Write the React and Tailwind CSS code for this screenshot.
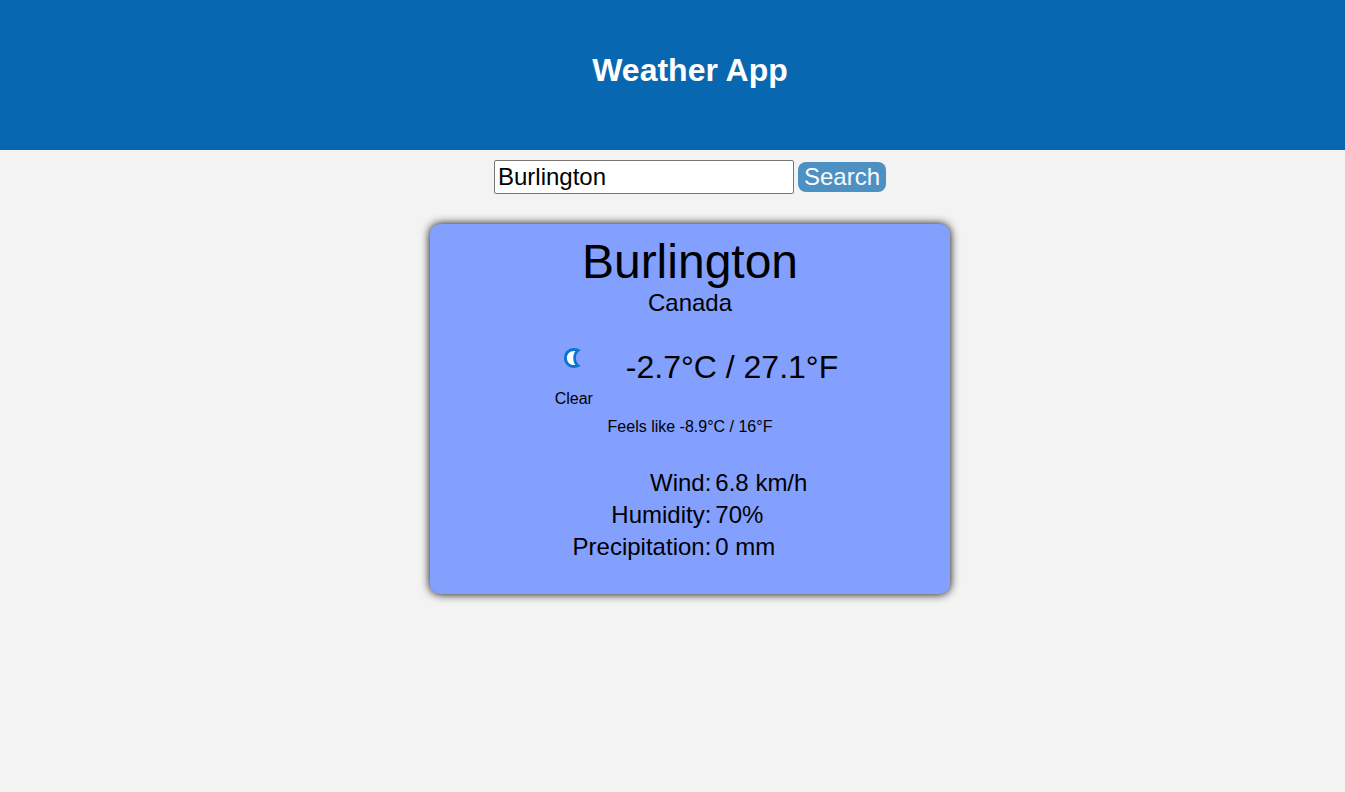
export default function App() {
  return (
    <div className="min-h-screen bg-[#f3f3f3] font-['Liberation_Sans',Arial,sans-serif] text-black">
      <header className="flex h-[150px] items-start justify-center bg-[#0867b1] pt-[50px] pl-[35px]">
        <h1 className="text-[32px] leading-10 font-bold text-white">Weather App</h1>
      </header>
      <main className="flex flex-col items-center pt-[10px] pl-[35px]">
        <form className="flex items-center gap-1" onSubmit={(e) => e.preventDefault()}>
          <input
            type="text"
            aria-label="City"
            defaultValue="Burlington"
            className="h-[34px] w-[300px] rounded-[2px] border border-[#767676] bg-white px-[3px] text-2xl leading-7"
          />
          <button type="submit" className="h-[30px] rounded-lg bg-[#0867b1] px-[6px] text-2xl leading-[30px] text-white opacity-70">
            Search
          </button>
        </form>
        <section className="mt-[30px] flex w-full max-w-[520px] flex-col items-center rounded-[10px] bg-[#83a0ff] pt-[10px] pb-[31px] shadow-[0_0_10px_#000]">
          <h2 className="text-5xl leading-[56px]">Burlington</h2>
          <p className="text-2xl leading-[26px]">Canada</p>
          <div className="mt-[10px] flex items-center gap-5">
            <div className="flex flex-col items-center">
              <svg viewBox="0 0 64 64" className="h-16 w-16" aria-hidden="true">
                <path d="M38.6 24.2 C36.8 22.9 34.6 22.1 32 22.1 C26.3 22.1 22 26.4 22 32 C22 37.6 26.3 41.9 32 41.9 C34.6 41.9 36.8 41.1 38.6 39.8 C35.6 38.2 33.9 35.5 33.9 32 C33.9 28.5 35.6 25.8 38.6 24.2Z" fill="#0875d1" />
                <path d="M33.4 25 C28.4 24.3 24.9 27.4 24.9 32 C24.9 36.6 28.4 39.7 33.4 39 C30.6 35.3 30.6 28.7 33.4 25Z" fill="#fff" />
              </svg>
              <p className="text-base leading-[18px]">Clear</p>
            </div>
            <p className="text-[32px] leading-9">-2.7°C / 27.1°F</p>
          </div>
          <p className="mt-[10px] text-base leading-[18px]">Feels like -8.9°C / 16°F</p>
          <table className="mt-[31px] text-2xl leading-8">
            <tbody>
              <tr><th scope="row" className="pr-1 text-right font-normal">Wind:</th><td>6.8 km/h</td></tr>
              <tr><th scope="row" className="pr-1 text-right font-normal">Humidity:</th><td>70%</td></tr>
              <tr><th scope="row" className="pr-1 text-right font-normal">Precipitation:</th><td>0 mm</td></tr>
            </tbody>
          </table>
        </section>
      </main>
    </div>
  );
}
